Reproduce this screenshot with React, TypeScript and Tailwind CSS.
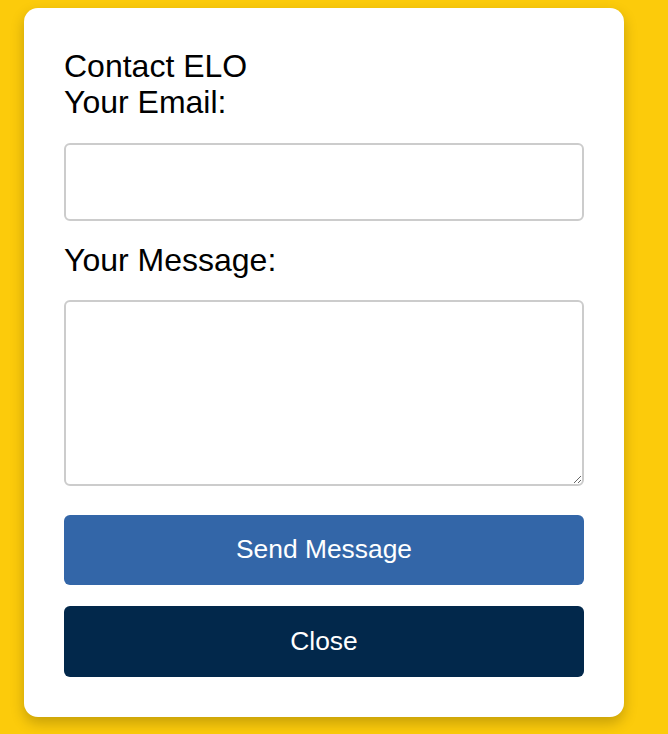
export default function App() {
  return (
    <div className="min-h-screen bg-[#fccb0b] pl-6 pt-2 font-['Liberation_Sans',Arial,sans-serif] text-black">
      <div className="w-[600px] rounded-[14px] bg-white px-10 pt-10 pb-10 shadow-[0_6px_14px_rgba(0,0,0,0.22)]">
        <div className="text-[32px] leading-[36px]">Contact ELO</div>
        <label className="block text-[32px] leading-[36px]">Your Email:</label>
        <input
          type="email"
          className="mt-[23px] block h-[78px] w-full rounded-[6px] border-2 border-[#cccccc] bg-white px-3 outline-none"
        />
        <label className="mt-[21px] block text-[32px] leading-[36px]">Your Message:</label>
        <textarea className="mt-[22px] block h-[186px] w-full rounded-[6px] border-2 border-[#cccccc] bg-white p-3 outline-none" />
        <button className="mt-[29px] block h-[70px] w-full rounded-[6px] bg-[#3366a8] text-[26.4px] text-white">
          Send Message
        </button>
        <button className="mt-[21px] block h-[71px] w-full rounded-[6px] bg-[#02284b] text-[26.4px] text-white">
          Close
        </button>
      </div>
    </div>
  )
}
